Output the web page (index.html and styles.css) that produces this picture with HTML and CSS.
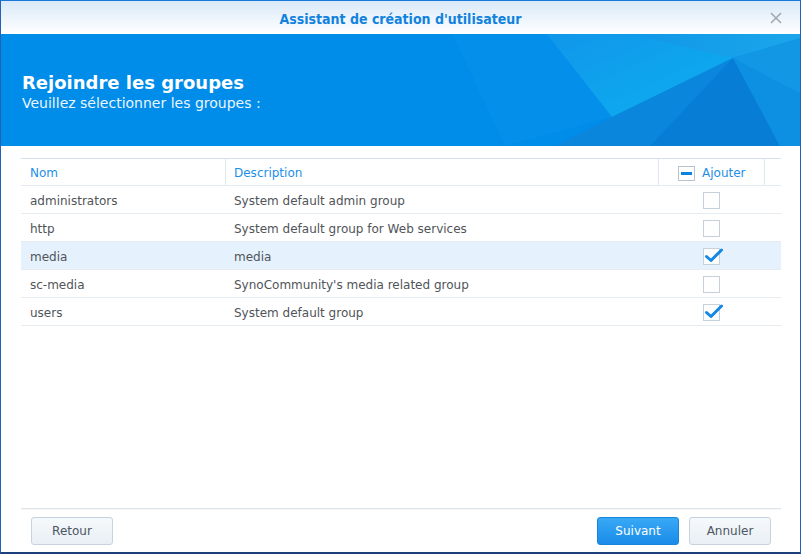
FILE: index.html
```html
<!DOCTYPE html>
<html lang="fr">
<head>
<meta charset="utf-8">
<title>Assistant de création d'utilisateur</title>
<link rel="stylesheet" href="styles.css">
</head>
<body>
<div class="window">
  <div class="titlebar">
    <span class="title">Assistant de création d'utilisateur</span>
    <svg class="close" width="12" height="12" viewBox="0 0 12 12"><path d="M1 1 L11 11 M11 1 L1 11" stroke="#a3a8ad" stroke-width="1.6" fill="none"/></svg>
  </div>
  <div class="banner">
    <svg class="banner-art" width="801" height="112" viewBox="0 0 801 112" preserveAspectRatio="none">
      <defs>
        <linearGradient id="g1" x1="0" y1="0" x2="1" y2="1">
          <stop offset="0" stop-color="#1196ea"/>
          <stop offset="1" stop-color="#0cb0f0"/>
        </linearGradient>
        <linearGradient id="g2" x1="0" y1="0" x2="1" y2="0">
          <stop offset="0" stop-color="#1097e8"/>
          <stop offset="1" stop-color="#1ba6ea"/>
        </linearGradient>
      </defs>
      <polygon points="452,0 560,0 612,83 505,112" fill="#0791ec" opacity="0.5"/>
      <polygon points="547,0 700,0 733,24 612,83" fill="url(#g1)"/>
      <polygon points="630,0 801,0 801,4 733,24" fill="url(#g2)"/>
      <polygon points="733,24 801,4 801,112 780,112" fill="#1197e4"/>
      <polygon points="612,83 733,24 650,112 555,112" fill="#0a86dd"/>
      <polygon points="733,24 780,112 650,112" fill="#087dd5"/>
      <polygon points="733,24 801,60 801,112 780,112" fill="#0d8fe2"/>
    </svg>
    <div class="banner-text">
      <h1 class="heading">Rejoindre les groupes</h1>
      <p class="subheading">Veuillez sélectionner les groupes :</p>
    </div>
  </div>
  <div class="content">
    <div class="grid">
      <div class="row head">
        <div class="cell c-name">Nom</div>
        <div class="cell c-desc">Description</div>
        <div class="cell c-add"><span class="box box-partial"><span class="dash"></span></span><span class="add-label">Ajouter</span></div>
        <div class="cell c-rest"></div>
      </div>
      <div class="row">
        <div class="cell c-name">administrators</div>
        <div class="cell c-desc">System default admin group</div>
        <div class="cell c-add center"><span class="box"></span></div>
        <div class="cell c-rest"></div>
      </div>
      <div class="row">
        <div class="cell c-name">http</div>
        <div class="cell c-desc">System default group for Web services</div>
        <div class="cell c-add center"><span class="box"></span></div>
        <div class="cell c-rest"></div>
      </div>
      <div class="row selected">
        <div class="cell c-name">media</div>
        <div class="cell c-desc">media</div>
        <div class="cell c-add center"><span class="box"><svg class="tick" width="20" height="16" viewBox="0 0 20 16"><path d="M2.5 8.5 L7 12.5 L17.5 2" stroke="#1488e6" stroke-width="3" fill="none" stroke-linecap="round" stroke-linejoin="round"/></svg></span></div>
        <div class="cell c-rest"></div>
      </div>
      <div class="row">
        <div class="cell c-name">sc-media</div>
        <div class="cell c-desc">SynoCommunity's media related group</div>
        <div class="cell c-add center"><span class="box"></span></div>
        <div class="cell c-rest"></div>
      </div>
      <div class="row">
        <div class="cell c-name">users</div>
        <div class="cell c-desc">System default group</div>
        <div class="cell c-add center"><span class="box"><svg class="tick" width="20" height="16" viewBox="0 0 20 16"><path d="M2.5 8.5 L7 12.5 L17.5 2" stroke="#1488e6" stroke-width="3" fill="none" stroke-linecap="round" stroke-linejoin="round"/></svg></span></div>
        <div class="cell c-rest"></div>
      </div>
    </div>
  </div>
  <div class="footer">
    <button class="btn">Retour</button>
    <div class="spacer"></div>
    <button class="btn btn-primary">Suivant</button>
    <button class="btn">Annuler</button>
  </div>
</div>
</body>
</html>
```

FILE: styles.css
```css
* { box-sizing: border-box; }
html, body { margin: 0; padding: 0; }
body {
  width: 801px;
  height: 554px;
  overflow: hidden;
  background: #ffffff;
  font-family: "DejaVu Sans", Verdana, sans-serif;
}
.window {
  width: 801px;
  height: 554px;
  display: flex;
  flex-direction: column;
  border-top: 1px solid #1a78d8;
  border-left: 1px solid #2461b8;
  border-right: 1px solid #2461b8;
  border-bottom: 2px solid #1d3f7c;
  background: #ffffff;
}
.titlebar {
  height: 33px;
  flex: none;
  position: relative;
  display: flex;
  align-items: center;
  justify-content: center;
  background: linear-gradient(#d9e9f8, #ffffff);
}
.title {
  font-family: "DejaVu Sans Condensed", "DejaVu Sans", sans-serif;
  font-stretch: condensed;
  font-weight: bold;
  font-size: 14px;
  color: #1182de;
  padding-top: 2px;
}
.close {
  position: absolute;
  right: 18px;
  top: 11px;
}
.banner {
  height: 112px;
  flex: none;
  position: relative;
  background: #008ce9;
  overflow: hidden;
}
.banner-art {
  position: absolute;
  left: -1px;
  top: 0;
}
.banner-text {
  position: relative;
  padding: 38px 0 0 21px;
  color: #ffffff;
}
.heading {
  margin: 0;
  font-size: 18px;
  font-weight: bold;
  line-height: 22px;
}
.subheading {
  margin: 0;
  font-size: 14px;
  line-height: 18px;
  color: #eaf5ff;
}
.content {
  flex: 1;
  padding: 12px 19px 0 20px;
}
.grid {
  border-top: 1px solid #d3e1ee;
}
.row {
  display: flex;
  height: 28px;
  border-bottom: 1px solid #e6ebf0;
  font-size: 12px;
  color: #505459;
}
.row.head {
  height: 27px;
  border-bottom: 1px solid #e3eaf1;
  color: #1d8fe8;
}
.row.selected { background: #e5f2fd; }
.cell {
  display: flex;
  align-items: center;
  padding-left: 9px;
  padding-top: 2px;
}
.c-name { width: 204px; }
.c-desc { width: 433px; }
.c-add { width: 106px; }
.c-rest { flex: 1; }
.head .c-desc, .head .c-add { border-left: 1px solid #e0e8f0; }
.head .c-desc { padding-left: 8px; }
.head .c-rest { border-left: 1px solid #e0e8f0; }
.head .c-add { padding-left: 19px; }
.add-label { margin-left: 7px; }
.center { justify-content: center; padding-left: 0; }
.box {
  position: relative;
  display: inline-block;
  width: 17px;
  height: 17px;
  border: 1px solid #c7d1db;
  background: #ffffff;
}
.box-partial {
  width: 17px;
  height: 15px;
  border-color: #b7c3cf;
  display: inline-flex;
  align-items: center;
  justify-content: center;
}
.dash {
  width: 11px;
  height: 3px;
  background: #0a84e0;
}
.tick {
  position: absolute;
  left: 0px;
  top: -1px;
}
.footer {
  flex: none;
  height: 44px;
  margin: 0 19px 0 20px;
  border-top: 1px solid #dfe4e9;
  box-shadow: inset 0 1px 0 #f4f6f8;
  padding: 8px 10px 0 10px;
  display: flex;
  align-items: flex-start;
  gap: 10px;
}
.spacer { flex: 1; }
.btn {
  width: 82px;
  height: 28px;
  border: 1px solid #c6d3df;
  border-radius: 3px;
  background: linear-gradient(#f6f9fc, #e9eff5);
  color: #4c5663;
  font-family: "DejaVu Sans", Verdana, sans-serif;
  font-size: 12px;
  padding: 0;
}
.btn-primary {
  border-color: #1a86d8;
  background: linear-gradient(#38a8f6, #1a8ce8);
  color: #ffffff;
}
```
